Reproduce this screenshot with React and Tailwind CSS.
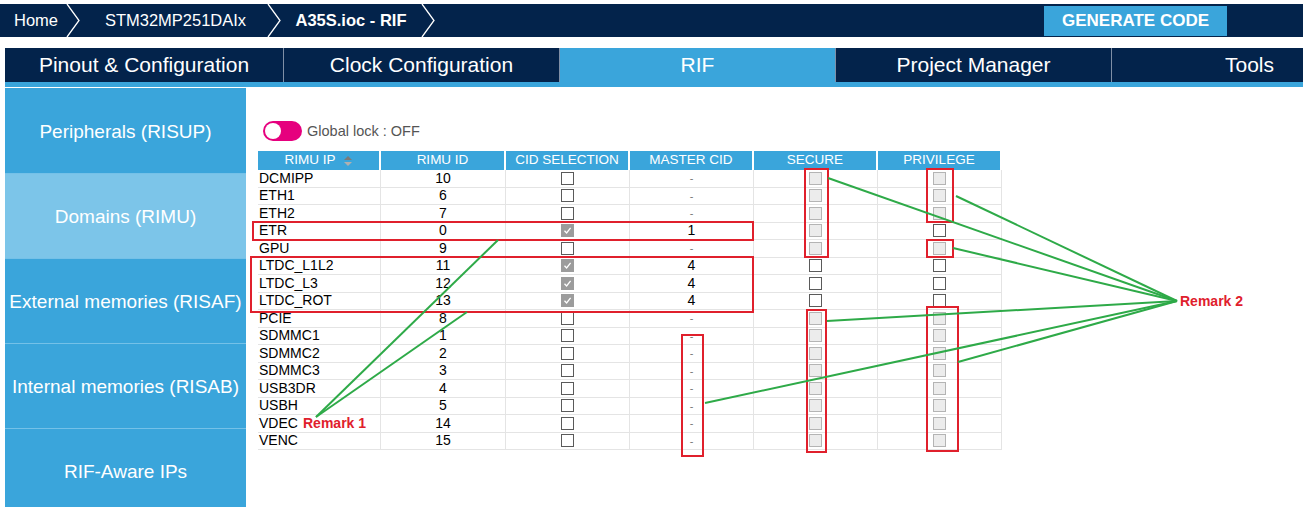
import React from "react";

const rows = [
  { ip: "DCMIPP", id: 10 },
  { ip: "ETH1", id: 6 },
  { ip: "ETH2", id: 7 },
  { ip: "ETR", id: 0, cid: true, master: "1", priv: true },
  { ip: "GPU", id: 9 },
  { ip: "LTDC_L1L2", id: 11, cid: true, master: "4", sec: true, priv: true },
  { ip: "LTDC_L3", id: 12, cid: true, master: "4", sec: true, priv: true },
  { ip: "LTDC_ROT", id: 13, cid: true, master: "4", sec: true, priv: true },
  { ip: "PCIE", id: 8 },
  { ip: "SDMMC1", id: 1 },
  { ip: "SDMMC2", id: 2 },
  { ip: "SDMMC3", id: 3 },
  { ip: "USB3DR", id: 4 },
  { ip: "USBH", id: 5 },
  { ip: "VDEC", id: 14 },
  { ip: "VENC", id: 15 },
];

const sideItems = [
  "Peripherals (RISUP)",
  "Domains (RIMU)",
  "External memories (RISAF)",
  "Internal memories (RISAB)",
  "RIF-Aware IPs",
];

const tabs = ["Pinout & Configuration", "Clock Configuration", "RIF", "Project Manager", "Tools"];

function Chevron() {
  return (
    <svg width="16" height="33" viewBox="0 0 16 33" className="shrink-0">
      <polyline points="2,0 14,16.5 2,33" fill="none" stroke="#ffffff" strokeWidth="1.3" />
    </svg>
  );
}

// case a cocher: enabled / disabled / checked(disabled)
function Box({ mode }) {
  if (mode === "checked") {
    return (
      <span className="flex h-[13px] w-[13px] items-center justify-center bg-[#9c9c9c]">
        <svg width="9" height="9" viewBox="0 0 9 9">
          <polyline points="1.5,4.8 3.6,7 7.6,1.8" fill="none" stroke="#fff" strokeWidth="1.3" />
        </svg>
      </span>
    );
  }
  if (mode === "disabled") {
    return <span className="block h-[13px] w-[13px] border border-[#b4b4b4] bg-[#ececec]" />;
  }
  return <span className="block h-[13px] w-[13px] border border-[#5a5a5a] bg-white" />;
}

const colW = ["w-[123px]", "w-[125px]", "w-[124px]", "w-[124px]", "w-[124px]", "w-[124px]"];

export default function App() {
  return (
    <div className="relative h-[507px] w-[1303px] overflow-hidden bg-white font-['Liberation_Sans',Arial,sans-serif]">
      {/* fil d'ariane */}
      <div className="mt-[4px] flex h-[33px] items-center bg-[#03234b] text-[16.5px] text-white">
        <div className="w-[65px] pl-[14px]">Home</div>
        <Chevron />
        <div className="w-[185px] pl-[4px] text-center">STM32MP251DAIx</div>
        <Chevron />
        <div className="w-[138px] text-center font-bold">A35S.ioc - RIF</div>
        <Chevron />
        <button className="ml-auto mr-[76px] h-[30px] w-[183px] bg-[#3aa5db] text-[17px] font-bold text-white">
          GENERATE CODE
        </button>
      </div>

      {/* onglets */}
      <div className="ml-[5px] mt-[11px] flex h-[34px] overflow-hidden">
        {tabs.map((t, i) => (
          <div
            key={t}
            className={`flex h-full shrink-0 items-center justify-center border-r border-[#7f8fa6] text-[21px] text-white ${
              i === 0 ? "w-[279px]" : "w-[276px]"
            } ${t === "RIF" ? "bg-[#3aa5db]" : "bg-[#03234b]"}`}
          >
            {t}
          </div>
        ))}
      </div>
      <div className="ml-[5px] h-[5px] bg-[#3aa5db]" />

      <div className="mt-[1px] flex">
        {/* menu lateral */}
        <div className="ml-[5px] w-[241px] shrink-0">
          {sideItems.map((s, i) => (
            <div
              key={s}
              className={`flex h-[85px] items-center justify-center pt-[3px] text-[19px] text-white ${
                i === 1 ? "bg-[#7cc5e9]" : "bg-[#3aa5db]"
              } ${i === 0 ? "" : "border-t border-[#74c1e8]"}`}
            >
              {s}
            </div>
          ))}
        </div>

        {/* contenu */}
        <div className="pl-[12px]">
          <div className="ml-[5px] mt-[33px] flex h-[20px] items-center">
            <span className="relative block h-[20px] w-[39px] rounded-full bg-[#e6007e]">
              <span className="absolute left-[2px] top-[2px] block h-[16px] w-[16px] rounded-full bg-white" />
            </span>
            <span className="ml-[5px] mt-[2px] text-[14.5px] text-[#555555]">Global lock : OFF</span>
          </div>

          <div className="mt-[10px] w-[744px]">
            <div className="flex h-[19px] text-[13.5px] text-white">
              {["RIMU IP", "RIMU ID", "CID SELECTION", "MASTER CID", "SECURE", "PRIVILEGE"].map((h, i) => (
                <div
                  key={h}
                  className={`${colW[i]} flex items-center justify-center border-r-2 border-white bg-[#3aa5db]`}
                >
                  {h}
                  {i === 0 && (
                    <svg width="10" height="12" viewBox="0 0 10 12" className="ml-[7px]">
                      <polygon points="5,1 9,5 1,5" fill="#7a7a7a" />
                      <polygon points="1,7 9,7 5,11" fill="#b0b0b0" />
                    </svg>
                  )}
                </div>
              ))}
            </div>
            {rows.map((r) => (
              <div key={r.ip} className="flex h-[17.5px] border-b border-[#e4e4e4] text-[14px] text-black">
                <div className={`${colW[0]} flex items-center border-r border-[#e4e4e4] pl-[1px]`}>{r.ip}</div>
                <div className={`${colW[1]} flex items-center justify-center border-r border-[#e4e4e4]`}>{r.id}</div>
                <div className={`${colW[2]} flex items-center justify-center border-r border-[#e4e4e4]`}>
                  <Box mode={r.cid ? "checked" : "enabled"} />
                </div>
                <div className={`${colW[3]} flex items-center justify-center border-r border-[#e4e4e4]`}>
                  {r.master ? r.master : <span className="text-[11px] text-[#777777]">-</span>}
                </div>
                <div className={`${colW[4]} flex items-center justify-center border-r border-[#e4e4e4]`}>
                  <Box mode={r.sec ? "enabled" : "disabled"} />
                </div>
                <div className={`${colW[5]} flex items-center justify-center border-r border-[#e4e4e4]`}>
                  <Box mode={r.priv ? "enabled" : "disabled"} />
                </div>
              </div>
            ))}
          </div>
        </div>
      </div>

      {/* annotations par-dessus */}
      <svg className="pointer-events-none absolute left-0 top-0" width="1303" height="507" viewBox="0 0 1303 507">
        <g fill="none" stroke="#e0202c" strokeWidth="2">
          <rect x="253" y="222" width="500" height="18" />
          <rect x="251" y="257" width="502" height="55" />
          <rect x="805" y="169" width="23" height="88" />
          <rect x="927" y="169" width="26" height="53" />
          <rect x="927" y="240" width="26" height="17" />
          <rect x="682" y="335" width="21" height="121" />
          <rect x="807" y="310" width="19" height="142" />
          <rect x="927" y="307" width="31" height="144" />
        </g>
        <g stroke="#2eaa48" strokeWidth="2">
          <line x1="1177" y1="301" x2="828" y2="178" />
          <line x1="1177" y1="301" x2="956" y2="196" />
          <line x1="1177" y1="301" x2="953" y2="248" />
          <line x1="1177" y1="301" x2="827" y2="321" />
          <line x1="1177" y1="301" x2="958" y2="362" />
          <line x1="1177" y1="301" x2="705" y2="403" />
          <line x1="316" y1="417" x2="498" y2="240" />
          <line x1="316" y1="417" x2="467" y2="312" />
        </g>
      </svg>
      <span className="absolute left-[303px] top-[413px] text-[14px] font-bold text-[#e0202c]">Remark 1</span>
      <span className="absolute left-[1180px] top-[291px] text-[14px] font-bold text-[#e0202c]">Remark 2</span>
    </div>
  );
}
